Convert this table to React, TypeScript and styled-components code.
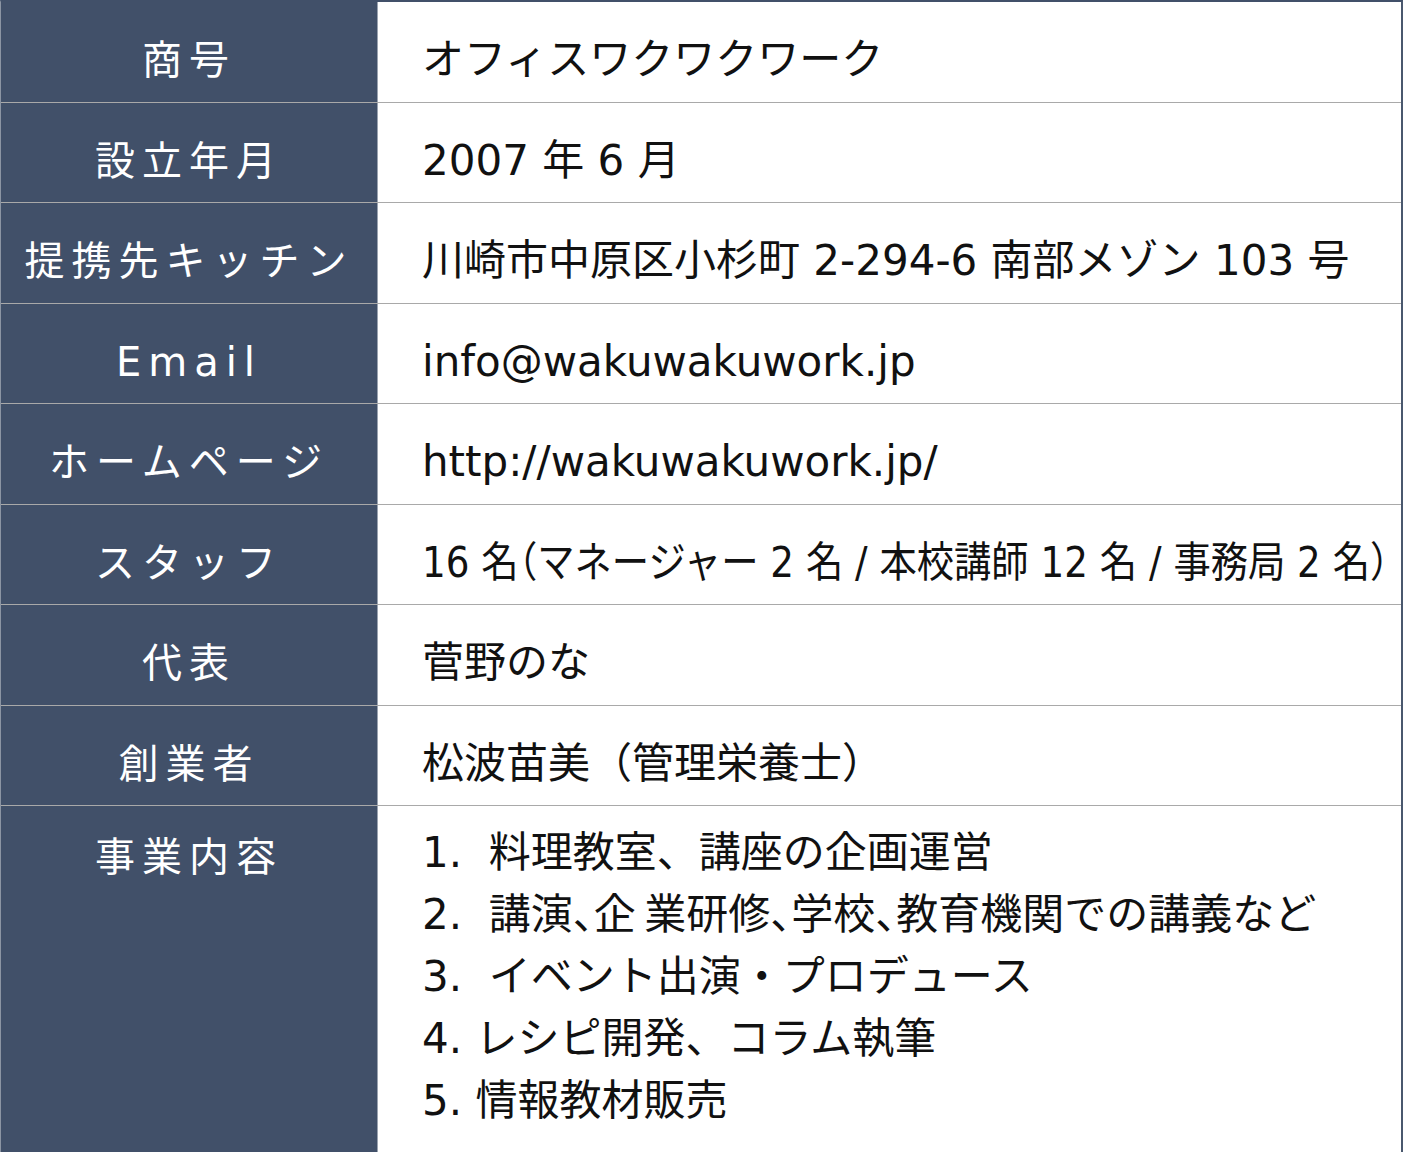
import React from "react";
import styled, { createGlobalStyle } from "styled-components";

const GlobalStyle = createGlobalStyle`
  html, body { margin: 0; padding: 0; background: #ffffff; }
  body { font-family: "DejaVu Sans", "Noto Sans CJK JP", sans-serif; }
`;

const Table = styled.div`
  width: 1403px;
  box-sizing: border-box;
  border-top: 2px solid #415069;
  border-right: 2px solid #4a586e;
  border-bottom: 2px solid #4a586e;
  border-left: 1px solid #8c95a3;
  overflow: hidden;
`;

const Row = styled.div<{ $h: number; $last?: boolean }>`
  display: grid;
  grid-template-columns: 376px 1fr;
  height: ${(p) => p.$h}px;
  box-sizing: border-box;
  border-bottom: ${(p) => (p.$last ? "none" : "1px solid #a9a9a9")};
`;

const Label = styled.div<{ $top?: boolean }>`
  background: #415069;
  color: #ffffff;
  font-size: 40px;
  letter-spacing: 7px;
  display: flex;
  justify-content: center;
  align-items: ${(p) => (p.$top ? "flex-start" : "center")};
  padding-top: ${(p) => (p.$top ? "22px" : "16px")};
  box-sizing: border-box;
  line-height: 58px;
  white-space: nowrap;
`;

const Value = styled.div<{ $top?: boolean }>`
  border-left: 1px solid #9aa3b0;
  background: #ffffff;
  color: #111111;
  font-size: 42px;
  display: flex;
  flex-direction: column;
  justify-content: ${(p) => (p.$top ? "flex-start" : "center")};
  padding-top: 16px;
  padding-left: 44px;
  box-sizing: border-box;
  white-space: pre;
  min-width: 0;
  overflow: hidden;
  line-height: 58px;
`;

const Condensed = styled.span<{ $scale: number }>`
  display: inline-block;
  transform: scaleX(${(p) => p.$scale});
  transform-origin: left center;
`;

const HalfPunct = styled.span`
  font-feature-settings: "halt" 1;
`;

const List = styled.div`
  display: flex;
  flex-direction: column;
  line-height: 62px;
`;

type Item = { label: string; value: React.ReactNode; h: number };

const items: Item[] = [
  { label: "商号", value: "オフィスワクワクワーク", h: 101 },
  { label: "設立年月", value: "2007 年 6 月", h: 100 },
  { label: "提携先キッチン", value: "川崎市中原区小杉町 2-294-6 南部メゾン 103 号", h: 101 },
  { label: "Email", value: "info@wakuwakuwork.jp", h: 100 },
  { label: "ホームページ", value: "http://wakuwakuwork.jp/", h: 101 },
  {
    label: "スタッフ",
    value: (
      <Condensed $scale={0.888}>
        {"16 名"}
        <HalfPunct>（</HalfPunct>
        {"マネージャー 2 名 / 本校講師 12 名 / 事務局 2 名"}
        <HalfPunct>）</HalfPunct>
      </Condensed>
    ),
    h: 100,
  },
  { label: "代表", value: "菅野のな", h: 101 },
  { label: "創業者", value: "松波苗美（管理栄養士）", h: 100 },
];

export default function App() {
  return (
    <>
      <GlobalStyle />
      <Table>
        {items.map((it) => (
          <Row key={it.label} $h={it.h}>
            <Label>{it.label}</Label>
            <Value>
              <div>{it.value}</div>
            </Value>
          </Row>
        ))}
        <Row $h={346} $last>
          <Label $top>事業内容</Label>
          <Value $top>
            <List>
              <div>{"1.  料理教室、講座の企画運営"}</div>
              <div>
                {"2.  講演"}
                <HalfPunct>、</HalfPunct>
                {"企\u2009業研修"}
                <HalfPunct>、</HalfPunct>
                {"学校"}
                <HalfPunct>、</HalfPunct>
                {"教育機関での講義など"}
              </div>
              <div>{"3.  イベント出演・プロデュース"}</div>
              <div>{"4. レシピ開発、コラム執筆"}</div>
              <div>{"5. 情報教材販売"}</div>
            </List>
          </Value>
        </Row>
      </Table>
    </>
  );
}
